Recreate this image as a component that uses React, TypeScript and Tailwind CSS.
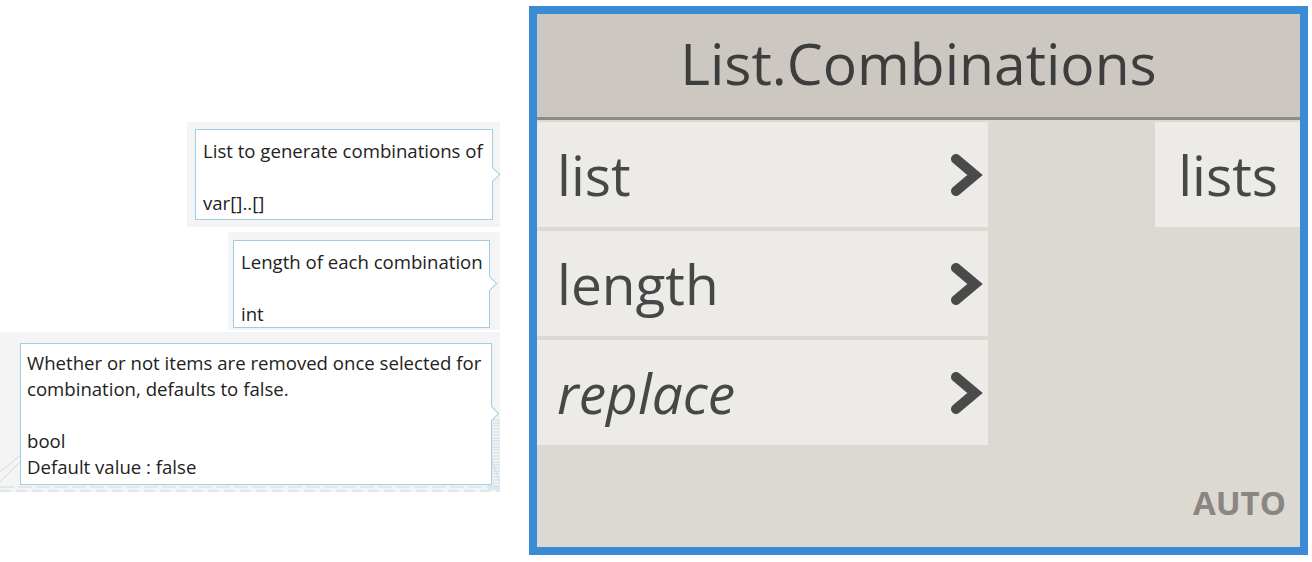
import React from "react";

const font = { fontFamily: '"Open Sans", "Noto Sans", sans-serif' };

function Tooltip({ lines, className }: { lines: string[]; className: string }) {
  return (
    <div className={`relative bg-white border border-[#9fcfe3] text-[18.6px] leading-[26px] text-[#222222] ${className}`}>
      {lines.map((l, i) => (
        <div key={i} className="whitespace-pre h-[26px]">{l === "" ? " " : l}</div>
      ))}
      <div className="absolute right-[-6px] top-1/2 -mt-[6px] w-[11px] h-[11px] bg-white border-t border-r border-[#9fcfe3] rotate-45" />
    </div>
  );
}

function Chevron() {
  return (
    <svg width="34" height="46" viewBox="0 0 34 46">
      <polyline points="7,7 26,23 7,39" fill="none" stroke="#4a4a4a" strokeWidth="10" strokeLinecap="round" strokeLinejoin="miter" />
    </svg>
  );
}

function PortRow({ label, italic }: { label: string; italic?: boolean }) {
  return (
    <div className="h-[105px] bg-[#edebe8] flex items-center justify-between pl-[20px] pr-[5px]">
      <span className={`text-[55px] leading-none text-[#474747] ${italic ? "italic" : ""}`}>{label}</span>
      <Chevron />
    </div>
  );
}

export default function App() {
  return (
    <div className="w-[1312px] h-[562px] bg-white flex" style={font}>
      <div className="w-[529px] flex flex-col items-end pr-[29px]">
        <div className="mt-[122px] w-[313px] h-[105px] bg-[#f4f4f4] pl-[8px] pt-[7px]">
          <Tooltip className="w-[298px] h-[91px] pl-[7px] pt-[8px]" lines={["List to generate combinations of", "", "var[]..[]"]} />
        </div>
        <div className="mt-[5px] w-[272px] h-[98px] bg-[#f4f4f4] pl-[5px] pt-[8px]">
          <Tooltip className="w-[257px] h-[88px] pl-[7px] pt-[8px]" lines={["Length of each combination", "", "int"]} />
        </div>
        <div className="relative mt-[2px] w-[500px] h-[160px] bg-[#f4f4f4] pl-[20px] pt-[11px]">
          <svg className="absolute left-0 top-0" width="500" height="160" viewBox="0 0 500 160">
            <g stroke="#c9dbe6" strokeWidth="1" fill="none">
              {Array.from({ length: 24 }).map((_, i) => (
                <line key={"h" + i} x1="488" x2="500" y1={88 + i * 3} y2={88 + i * 3} />
              ))}
              <line x1="0" x2="500" y1="155" y2="155" strokeDasharray="14 4" />
              <line x1="0" x2="500" y1="159" y2="159" strokeDasharray="10 6" />
              <line x1="0" x2="22" y1="150" y2="128" />
              <line x1="0" x2="22" y1="140" y2="122" />
              <line x1="480" x2="500" y1="100" y2="150" />
            </g>
          </svg>
          <Tooltip
            className="w-[472px] h-[142px] pl-[6px] pt-[6px]"
            lines={[
              "Whether or not items are removed once selected for",
              "combination, defaults to false.",
              "",
              "bool",
              "Default value : false",
            ]}
          />
        </div>
      </div>
      <div className="mt-[6px] w-[779px] h-[549px] border-[8px] border-[#3a8ad6] bg-[#dcd8d2] flex flex-col">
        <div className="h-[106px] shrink-0 bg-[#ccc7c1] border-b-[3px] border-[#8e8a85] flex items-center justify-center">
          <span className="text-[57px] leading-none text-[#3d3d3d] pb-[4px]">List.Combinations</span>
        </div>
        <div className="flex pt-[2px]">
          <div className="w-[451px] flex flex-col gap-[4px]">
            <PortRow label="list" />
            <PortRow label="length" />
            <PortRow label="replace" italic />
          </div>
          <div className="flex-1" />
          <div className="w-[145px] h-[105px] bg-[#edebe8] flex items-center justify-end pr-[22px]">
            <span className="text-[55px] leading-none text-[#474747]">lists</span>
          </div>
        </div>
        <div className="mt-auto self-end pr-[14px] pb-[28px] text-[33px] leading-none font-bold text-[#8a8681]">AUTO</div>
      </div>
    </div>
  );
}
